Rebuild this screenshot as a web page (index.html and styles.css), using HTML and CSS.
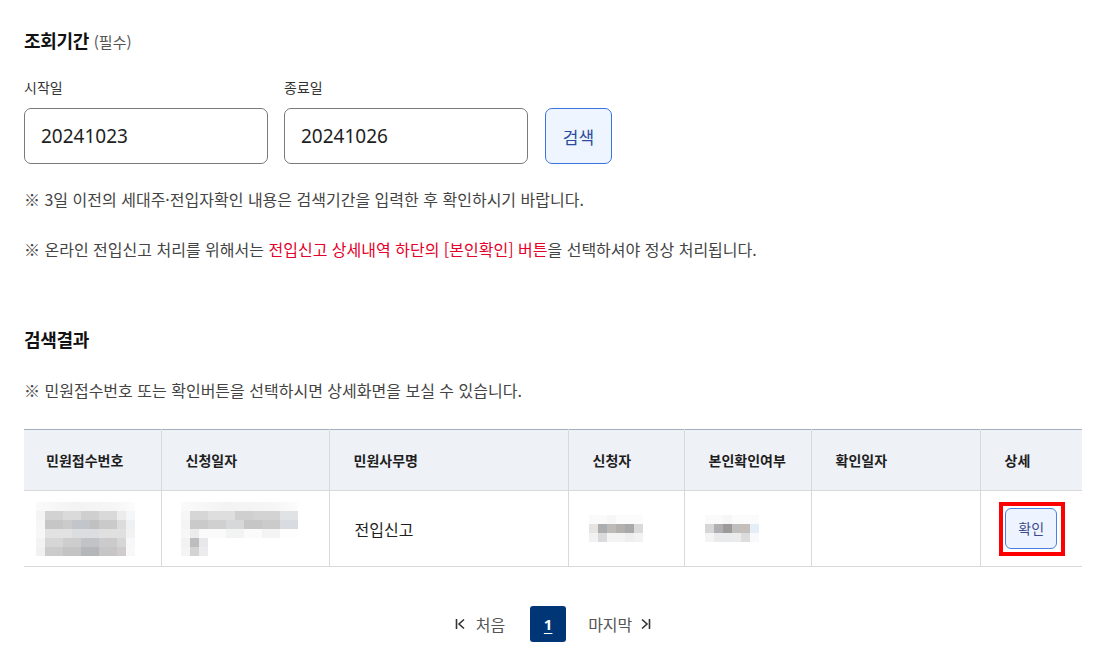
FILE: index.html
```html
<!DOCTYPE html>
<html lang="ko">
<head>
<meta charset="utf-8">
<link rel="stylesheet" href="styles.css">
</head>
<body>
<main class="page">
  <section class="period">
    <h2 class="sec-title">조회기간 <span class="req">(필수)</span></h2>
    <div class="search-row">
      <div class="field">
        <label class="field-label">시작일</label>
        <input class="date-input" type="text" value="20241023">
      </div>
      <div class="field">
        <label class="field-label">종료일</label>
        <input class="date-input" type="text" value="20241026">
      </div>
      <button class="btn-search">검색</button>
    </div>
    <p class="note note-first">※ 3일 이전의 세대주·전입자확인 내용은 검색기간을 입력한 후 확인하시기 바랍니다.</p>
    <p class="note note-second">※ 온라인 전입신고 처리를 위해서는 <span class="red">전입신고 상세내역 하단의 [본인확인] 버튼</span>을 선택하셔야 정상 처리됩니다.</p>
  </section>

  <section class="result">
    <h2 class="sec-title">검색결과</h2>
    <p class="note note-result">※ 민원접수번호 또는 확인버튼을 선택하시면 상세화면을 보실 수 있습니다.</p>

    <table class="grid">
      <colgroup>
        <col class="c1"><col class="c2"><col class="c3"><col class="c4"><col class="c5"><col class="c6"><col class="c7">
      </colgroup>
      <thead>
        <tr>
          <th class="first">민원접수번호</th>
          <th>신청일자</th>
          <th>민원사무명</th>
          <th>신청자</th>
          <th>본인확인여부</th>
          <th>확인일자</th>
          <th>상세</th>
        </tr>
      </thead>
      <tbody>
        <tr>
          <td class="first">
            <div class="mosaic m-no">
              <div class="mr r-a"></div><div class="mr r-b"></div><div class="mr r-c"></div>
              <div class="mr r-d"></div><div class="mr r-e"></div><div class="mr r-f"></div>
            </div>
          </td>
          <td>
            <div class="mosaic m-date">
              <div class="mr r-a"></div><div class="mr r-b2"></div><div class="mr r-c2"></div>
              <div class="mr r-g"></div><div class="mr r-h"></div><div class="mr r-i"></div>
            </div>
          </td>
          <td class="task">전입신고</td>
          <td>
            <div class="mosaic m-name">
              <div class="mr r-j"></div><div class="mr r-k"></div><div class="mr r-l"></div>
            </div>
          </td>
          <td>
            <div class="mosaic m-name">
              <div class="mr r-j"></div><div class="mr r-k2"></div><div class="mr r-l2"></div>
            </div>
          </td>
          <td></td>
          <td class="center">
            <span class="mark"><button class="btn-confirm">확인</button></span>
          </td>
        </tr>
      </tbody>
    </table>

    <nav class="pager">
      <a class="pg-link">
        <svg class="pg-ico" width="11" height="12" viewBox="0 0 11 12"><path d="M1.5 1v10M9 1.5 4 6l5 4.5" fill="none" stroke="#333" stroke-width="1.6"/></svg>
        처음
      </a>
      <span class="pg-cur">1</span>
      <a class="pg-link">
        마지막
        <svg class="pg-ico" width="11" height="12" viewBox="0 0 11 12"><path d="M9.5 1v10M2 1.5 7 6l-5 4.5" fill="none" stroke="#333" stroke-width="1.6"/></svg>
      </a>
    </nav>
  </section>
</main>
</body>
</html>
```

FILE: styles.css
```css
* { box-sizing: border-box; }
html, body { margin: 0; padding: 0; background: #fff; }
body {
  font-family: "Noto Sans CJK KR", "Noto Sans", sans-serif;
  color: #1e1e1e;
}
.page { padding: 0 17px 0 24px; }

.sec-title {
  margin: 0;
  height: 24px;
  font-size: 18px;
  line-height: 24px;
  font-weight: 700;
  color: #111;
  letter-spacing: -0.3px;
}
.period .sec-title { margin-top: 28px; }
.req { font-size: 15px; line-height: 1; font-weight: 400; color: #555; letter-spacing: 0; }

.search-row {
  display: flex;
  align-items: flex-end;
  margin-top: 25px;
}
.field { display: flex; flex-direction: column; margin-right: 16px; }
.field + .field { margin-right: 17px; }
.field-label {
  font-size: 14px;
  line-height: 20px;
  height: 20px;
  color: #333;
  margin-bottom: 11px;
}
.date-input {
  width: 244px;
  height: 56px;
  border: 1px solid #7a7a7a;
  border-radius: 7px;
  padding: 0 16px;
  font-family: "Noto Sans", "Noto Sans CJK KR", sans-serif;
  font-size: 19px;
  color: #1e1e1e;
  background: #fff;
  outline: none;
}
.btn-search {
  width: 67px;
  height: 56px;
  border: 1px solid #3a75e2;
  border-radius: 7px;
  background: #eef5ff;
  color: #2c4c9c;
  font-family: "Noto Sans CJK KR", sans-serif;
  font-size: 17px;
  padding: 0;
}

.note {
  margin: 0;
  font-size: 16px;
  line-height: 22px;
  height: 22px;
  color: #444;
  letter-spacing: 0;
}
.note-first { margin-top: 24px; }
.note-second { margin-top: 28px; }
.red { color: #e4002b; }

.result { margin-top: 67px; }
.note-result { margin-top: 28px; }

.grid {
  margin-top: 28px;
  width: 1058px;
  border-collapse: collapse;
  table-layout: fixed;
  border-top: 1px solid #a2adbd;
}
.c1 { width: 137px; } .c2 { width: 168px; } .c3 { width: 239px; }
.c4 { width: 116px; } .c5 { width: 127px; } .c6 { width: 169px; } .c7 { width: 102px; }

.grid th {
  height: 61px;
  background: #eef1f6;
  border-bottom: 1px solid #d9d9d9;
  border-left: 1px solid #d9d9d9;
  text-align: left;
  padding: 0 0 0 24px;
  font-size: 14px;
  font-weight: 700;
  color: #1e1e1e;
  letter-spacing: 0;
}
.grid td {
  height: 76px;
  border-bottom: 1px solid #d9d9d9;
  border-left: 1px solid #d9d9d9;
  padding: 0 0 0 24px;
  font-size: 16px;
  color: #1e1e1e;
}
.grid .first { border-left: none; padding-left: 22px; }
.grid td.first { padding-left: 12px; }
.grid td.task { padding-left: 25px; }
.grid td.center { text-align: center; padding: 0 0 0 2px; }

.mosaic { display: flex; flex-direction: column; }
.mr { height: 9px; }
.m-no { width: 99px; }
.m-date { width: 117px; margin-left: -5px; }
.m-name { width: 54px; margin-left: -4px; }
.m-name .mr { height: 9px; }

.r-a { background: linear-gradient(90deg, #fafafa, #f3f3f3 40%, #f6f6f6 80%, #fcfcfc); }
.r-b { background: linear-gradient(90deg, #f4f4f4 0 9px, #d2d2d2 9px 27px, #dadada 27px 45px, #cfcfcf 45px 63px, #d9d9d9 63px 81px, #ececec 81px 90px, #f5f6f8 90px); }
.r-c { background: linear-gradient(90deg, #f6f6f6 0 9px, #c6c6c6 9px 27px, #cbcbcb 27px 36px, #c2c6ca 36px 54px, #c0c0c0 54px 63px, #cacaca 63px 81px, #dcdcdc 81px 90px, #eef0f2 90px); }
.r-d { background: linear-gradient(90deg, #f7f7f7 0 9px, #e2e2e2 9px 36px, #dcdde0 36px 63px, #e0e0e0 63px 90px, #f2f2f2 90px); }
.r-e { background: linear-gradient(90deg, #f3f3f3 0 9px, #d6d6d6 9px 27px, #cdcdcd 27px 45px, #c1c4c7 45px 63px, #cbcbcb 63px 81px, #d6d6d6 81px 90px, #f6f7f8 90px); }
.r-f { background: linear-gradient(90deg, #f1f1f1 0 9px, #cbcbcb 9px 27px, #c4c4c4 27px 45px, #b4b6b9 45px 63px, #c6c6c6 63px 81px, #d0cccc 81px 90px, #f8f8f8 90px); }
.r-b2 { background: linear-gradient(90deg, #f6f6f6 0 9px, #d6d6d6 9px 27px, #dedede 27px 54px, #cfcfcf 54px 72px, #d3d3d3 72px 99px, #e0e2e4 99px); }
.r-c2 { background: linear-gradient(90deg, #f4f4f4 0 9px, #cacaca 9px 27px, #d0d0d0 27px 45px, #d6d8da 45px 63px, #c6c6c6 63px 81px, #cbcbcb 81px 99px, #d8dbdf 99px); }
.r-g { background: linear-gradient(90deg, #f7f7f7 0 9px, #ececec 9px 18px, #fafafa 18px 45px, #f2f4f4 45px 63px, #fbfbfb 63px 81px, #f4f4f4 81px 99px, #fdfdfd 99px); }
.r-h { background: linear-gradient(90deg, #f2f2f2 0 9px, #bdbdbd 9px 18px, #e8e8ea 18px 27px, transparent 27px); }
.r-i { background: linear-gradient(90deg, #f4f4f4 0 9px, #d3d3d3 9px 18px, #ececef 18px 27px, transparent 27px); }
.r-j { background: linear-gradient(90deg, #fafafa 0 18px, #f6f6f6 18px 27px, #fbfbfb 27px); }
.r-k { background: linear-gradient(90deg, #e7e3e0 0 9px, #acadaf 9px 18px, #bdbbb8 18px 27px, #b3b1ae 27px 36px, #a9a9ab 36px 45px, #dadadb 45px); }
.r-l { background: linear-gradient(90deg, #f1f1f1 0 9px, #dadadc 9px 18px, #f3f3f3 18px 36px, #eeeeee 36px 45px, #f2f2f2 45px); }
.r-k2 { background: linear-gradient(90deg, #d6d6d6 0 9px, #b0b0b2 9px 18px, #9d9b9a 18px 27px, #c1bfbd 27px 36px, #c5bebb 36px 45px, #e4eef8 45px); }
.r-l2 { background: linear-gradient(90deg, #f4f4f4 0 9px, #e9eaeb 9px 27px, #ebebeb 27px 36px, #dcdcdd 36px 45px, #f8f9fb 45px); }

.mark {
  display: inline-block;
  border: 4px solid #f00;
  padding: 2px 4px 3px 2px;
  line-height: 0;
}
.btn-confirm {
  width: 52px;
  height: 41px;
  border: 1px solid #4a7fe3;
  border-radius: 6px;
  background: #eef4ff;
  color: #3b4c8c;
  font-family: "Noto Sans CJK KR", sans-serif;
  font-size: 14px;
  padding: 0;
}

.pager {
  margin-top: 39px;
  display: flex;
  justify-content: center;
  align-items: center;
}
.pg-link {
  display: flex;
  align-items: center;
  font-size: 16px;
  color: #555;
  line-height: 36px;
  letter-spacing: 0;
}
.pg-link:first-child { margin-right: 25px; }
.pg-link:last-child { margin-left: 22px; }
.pg-link:first-child .pg-ico { margin-right: 10px; }
.pg-link:last-child .pg-ico { margin-left: 8px; }
.pg-cur {
  width: 36px;
  height: 36px;
  border-radius: 3px;
  background: #003675;
  color: #fff;
  font-family: "Noto Sans", sans-serif;
  font-weight: 700;
  font-size: 15px;
  text-decoration: underline;
  text-underline-offset: 3px;
  display: flex;
  align-items: center;
  justify-content: center;
}
```
